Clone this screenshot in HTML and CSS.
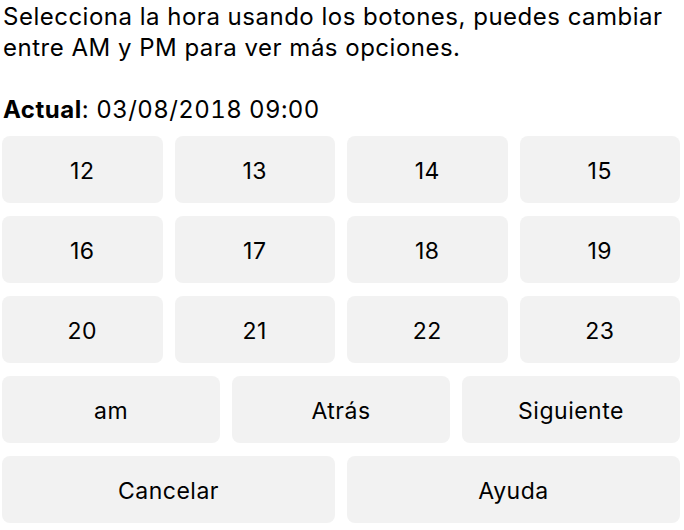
FILE: index.html
```html
<!DOCTYPE html>
<html lang="es">
<head>
<meta charset="utf-8">
<link rel="stylesheet" href="styles.css">
</head>
<body>
<div class="page">
  <p class="intro">Selecciona la hora usando los botones, puedes cambiar entre AM y PM para ver más opciones.</p>
  <p class="current"><strong>Actual</strong>: <span class="date">03/08/2018 09:00</span></p>
  <div class="grid grid-4">
    <button class="btn">12</button>
    <button class="btn">13</button>
    <button class="btn">14</button>
    <button class="btn">15</button>
    <button class="btn">16</button>
    <button class="btn">17</button>
    <button class="btn">18</button>
    <button class="btn">19</button>
    <button class="btn">20</button>
    <button class="btn">21</button>
    <button class="btn">22</button>
    <button class="btn">23</button>
  </div>
  <div class="grid grid-3">
    <button class="btn">am</button>
    <button class="btn">Atrás</button>
    <button class="btn">Siguiente</button>
  </div>
  <div class="grid grid-2">
    <button class="btn">Cancelar</button>
    <button class="btn">Ayuda</button>
  </div>
</div>
</body>
</html>
```
FILE: styles.css
```css
html, body {
  margin: 0;
  padding: 0;
  background: #ffffff;
}
body {
  font-family: Inter, "Noto Sans", sans-serif;
  color: #000;
  font-size: 24px;
  letter-spacing: 0.5px;
}
.page {
  width: 678px;
  padding: 0 4px 0 2px;
}
.intro {
  margin: 0;
  padding: 1px 0 0 1px;
  line-height: 31px;
}
.current {
  margin: 31px 0 0 0;
  padding-left: 1px;
  line-height: 31px;
}
.date {
  font-variant-numeric: tabular-nums;
  letter-spacing: 0.4px;
}
.grid {
  display: grid;
  column-gap: 12px;
  row-gap: 13px;
  margin-bottom: 13px;
}
.grid-4 {
  grid-template-columns: repeat(4, 1fr);
  margin-top: 11px;
}
.grid-3 {
  grid-template-columns: repeat(3, 1fr);
}
.grid-2 {
  grid-template-columns: repeat(2, 1fr);
}
.btn {
  height: 67px;
  border: none;
  border-radius: 8px;
  background: #f2f2f2;
  font-family: inherit;
  font-size: 23px;
  letter-spacing: 0.5px;
  color: #000;
  padding: 3px 0 0 0;
}
```
